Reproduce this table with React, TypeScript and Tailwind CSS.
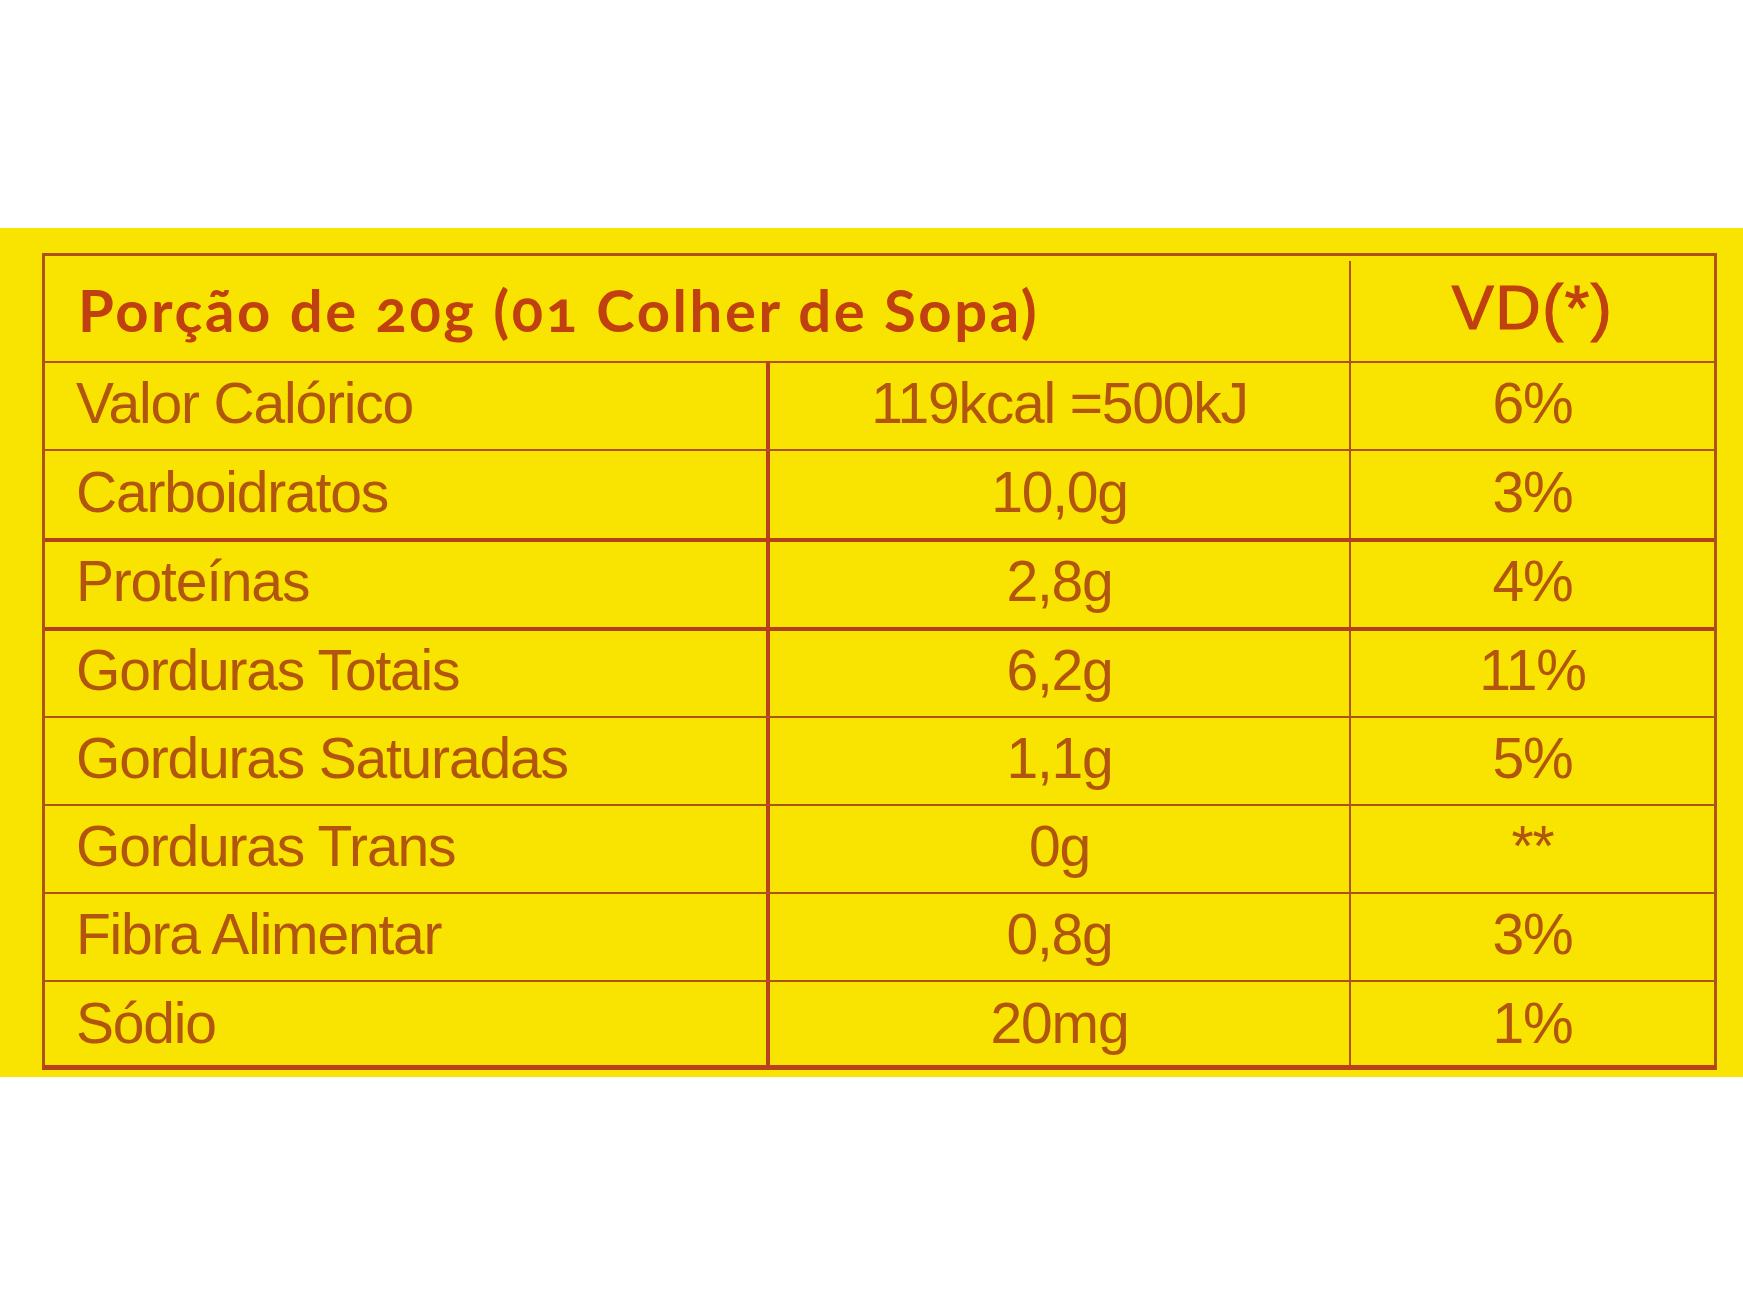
import React from "react";

type Row = { name: string; value: string; vd: string; h: string; top: string; pb: string };

const rows: Row[] = [
  { name: "Valor Calórico", value: "119kcal =500kJ", vd: "6%", h: "h-[88px]", top: "border-t-2 border-t-[#ad5218]", pb: "pb-[6px]" },
  { name: "Carboidratos", value: "10,0g", vd: "3%", h: "h-[89px]", top: "border-t-2 border-t-[#ad5218]", pb: "pb-[4px]" },
  { name: "Proteínas", value: "2,8g", vd: "4%", h: "h-[89px]", top: "border-t-4 border-t-[#b3401a]", pb: "pb-[6px]" },
  { name: "Gorduras Totais", value: "6,2g", vd: "11%", h: "h-[89px]", top: "border-t-4 border-t-[#b3401a]", pb: "pb-[6px]" },
  { name: "Gorduras Saturadas", value: "1,1g", vd: "5%", h: "h-[88px]", top: "border-t-2 border-t-[#ad5218]", pb: "pb-[6px]" },
  { name: "Gorduras Trans", value: "0g", vd: "**", h: "h-[88px]", top: "border-t-2 border-t-[#ad5218]", pb: "pb-[6px]" },
  { name: "Fibra Alimentar", value: "0,8g", vd: "3%", h: "h-[88px]", top: "border-t-2 border-t-[#ad5218]", pb: "pb-[6px]" },
  { name: "Sódio", value: "20mg", vd: "1%", h: "h-[85px]", top: "border-t-2 border-t-[#ad5218]", pb: "pb-[0px]" },
];

const cellText =
  "font-['Liberation_Sans',Arial,sans-serif] text-[57px] leading-none tracking-[-1.2px] text-[#b2550e]";

export default function App() {
  return (
    <div className="w-full h-[1306px] bg-white">
      <div className="h-[228px]" />
      <div className="bg-[#f8e400] pt-[25px] pb-[7px] pl-[42px] pr-[26px]">
        <div className="border-[3px] border-b-[5px] border-[#ad5218] border-b-[#b8401a] flex flex-col">
          <div className="flex h-[105px]">
            <div className="w-[1304px] flex items-center pl-[33px] pt-[2px]">
              <span className="font-['Lato','Noto_Sans',sans-serif] font-bold text-[58px] leading-none tracking-[2.6px] text-[#c0400f] oldstyle-nums">
                Porção de 20g (01 Colher de Sopa)
              </span>
            </div>
            <div className="flex-1 border-l-2 border-[#ad5218] mt-[5px] flex items-center justify-center pb-[8px]">
              <span className="font-['Liberation_Sans',Arial,sans-serif] text-[63px] leading-none tracking-[1.5px] text-[#c0400f] [-webkit-text-stroke:1.2px_#c0400f]">
                VD(*)
              </span>
            </div>
          </div>
          {rows.map((r) => (
            <div key={r.name} className={`flex ${r.h} ${r.top}`}>
              <div className={`w-[721px] flex items-center pl-[31px] ${r.pb}`}>
                <span className={cellText}>{r.name}</span>
              </div>
              <div className={`w-[583px] border-l-4 border-[#b8401a] flex items-center justify-center ${r.pb}`}>
                <span className={cellText}>{r.value}</span>
              </div>
              <div className={`flex-1 border-l-2 border-[#ad5218] flex items-center justify-center ${r.pb}`}>
                <span className={cellText}>{r.vd}</span>
              </div>
            </div>
          ))}
        </div>
      </div>
    </div>
  );
}
